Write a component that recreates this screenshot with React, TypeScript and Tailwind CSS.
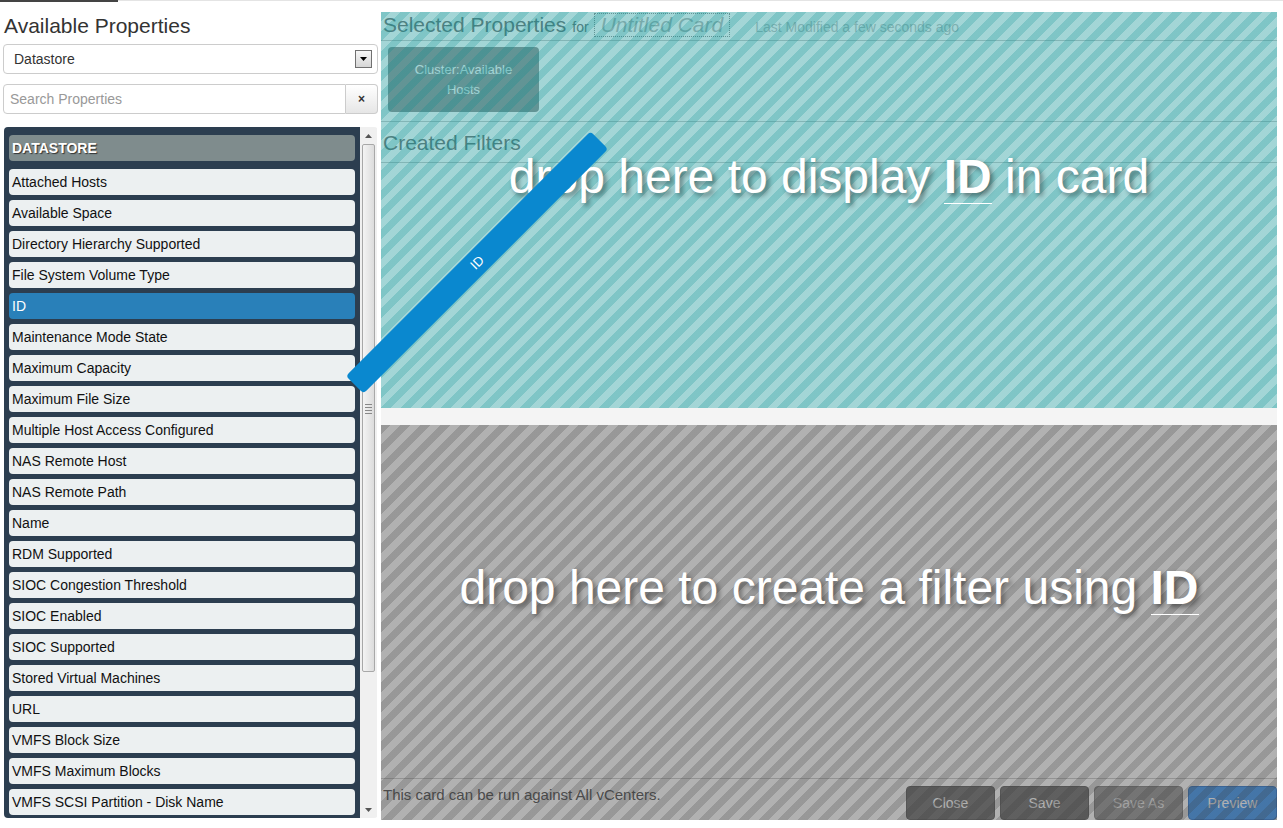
const properties = [
  "Attached Hosts",
  "Available Space",
  "Directory Hierarchy Supported",
  "File System Volume Type",
  "ID",
  "Maintenance Mode State",
  "Maximum Capacity",
  "Maximum File Size",
  "Multiple Host Access Configured",
  "NAS Remote Host",
  "NAS Remote Path",
  "Name",
  "RDM Supported",
  "SIOC Congestion Threshold",
  "SIOC Enabled",
  "SIOC Supported",
  "Stored Virtual Machines",
  "URL",
  "VMFS Block Size",
  "VMFS Maximum Blocks",
  "VMFS SCSI Partition - Disk Name",
];

const dropShadow = "[text-shadow:3px_3px_5px_rgba(0,0,0,0.45)]";

function Scrollbar() {
  return (
    <div className="w-[17px] bg-[#f0f0f0] flex flex-col items-center">
      <div className="h-[17px] w-full flex items-center justify-center">
        <svg width="7" height="4" viewBox="0 0 7 4">
          <path d="M0 4 L3.5 0 L7 4 Z" fill="#555" />
        </svg>
      </div>
      <div className="w-[13px] h-[528px] rounded-[2px] border border-[#a8a8a8] bg-[linear-gradient(90deg,#f4f4f4,#dcdcdc)] flex flex-col items-center justify-center gap-[2px] pt-[2px]">
        <div className="w-[7px] h-px bg-[#888]" />
        <div className="w-[7px] h-px bg-[#888]" />
        <div className="w-[7px] h-px bg-[#888]" />
        <div className="w-[7px] h-px bg-[#888]" />
      </div>
      <div className="flex-1" />
      <div className="h-[17px] w-full flex items-center justify-center">
        <svg width="7" height="4" viewBox="0 0 7 4">
          <path d="M0 0 L3.5 4 L7 0 Z" fill="#555" />
        </svg>
      </div>
    </div>
  );
}

function PropertyList() {
  return (
    <div className="mt-[13px] ml-[1px] h-[691px] flex rounded-[4px] overflow-hidden">
      <div className="w-[356px] bg-[#2c3e50] px-[5px] pt-[8px] flex flex-col gap-[5px]">
        <div className="h-[26px] shrink-0 mb-[3px] bg-[#7f8c8d] rounded-[4px] pl-[3px] text-[14px] leading-[26px] font-bold text-white [text-shadow:1px_1px_1px_#333]">
          DATASTORE
        </div>
        {properties.map((name) => (
          <div
            key={name}
            className={
              name === "ID"
                ? "h-[26px] shrink-0 bg-[#2980b9] rounded-[4px] pl-[3px] text-[14px] leading-[26px] text-white"
                : "h-[26px] shrink-0 bg-[#ecf0f1] rounded-[4px] pl-[3px] text-[14px] leading-[26px] text-[#111]"
            }
          >
            {name}
          </div>
        ))}
      </div>
      <Scrollbar />
    </div>
  );
}

function LeftPanel() {
  return (
    <div className="w-[381px] shrink-0 px-[3px] flex flex-col">
      <h1 className="mt-[10px] pl-px text-[21px] leading-[28px] text-[#333]">Available Properties</h1>
      <div className="mt-[4px] h-[30px] border border-[#ccc] rounded-[4px] flex items-center pl-[10px] pr-[5px] text-[14px] text-[#333]">
        <span className="flex-1">Datastore</span>
        <div className="w-[17px] h-[18px] border border-[#707070] bg-[linear-gradient(#f6f6f6,#d6d6d6)] flex items-center justify-center">
          <svg width="7" height="4" viewBox="0 0 7 4">
            <path d="M0 0 L3.5 4 L7 0 Z" fill="#000" />
          </svg>
        </div>
      </div>
      <div className="mt-[10px] h-[30px] flex">
        <input
          className="flex-1 min-w-0 border border-[#ccc] rounded-l-[4px] pl-[6px] text-[14px] text-[#333] placeholder:text-[#999] outline-none"
          placeholder="Search Properties"
        />
        <button className="w-[32px] border border-l-0 border-[#ccc] rounded-r-[4px] bg-[linear-gradient(#ffffff,#e6e6e6)] text-[12px] font-bold text-[#333]">
          ×
        </button>
      </div>
      <PropertyList />
    </div>
  );
}

function CardEditor() {
  return (
    <div className="h-full flex flex-col">
      <div className="h-[29px] shrink-0 border-b border-[#ccc] flex items-baseline pl-[2px] text-[#7a7a7a]">
        <span className="text-[21px] leading-[26px]">Selected Properties</span>
        <span className="ml-[6px] text-[14px]">for</span>
        <span className="ml-[5px] self-start mt-px h-[24px] border border-dotted border-[#999] px-[6px] text-[21px] leading-[22px] italic text-[#bbb]">
          Untitled Card
        </span>
        <span className="ml-[25px] text-[14px] text-[#c4c4c4]">Last Modified a few seconds ago</span>
      </div>
      <div className="h-[81px] shrink-0 border-b border-[#ccc] pt-[6px] pl-[7px]">
        <div className="w-[151px] h-[65px] rounded-[4px] bg-[#999] flex items-center justify-center text-center text-[13px] leading-[20px] text-white">
          Cluster:Available
          <br />
          Hosts
        </div>
      </div>
      <div className="h-[41px] shrink-0 border-b border-[#ccc] pt-[8px] pl-[2px] text-[21px] leading-[26px] text-[#7a7a7a]">
        Created Filters
      </div>
      <div className="flex-1" />
      <div className="h-[42px] shrink-0 border-t border-[#ccc] flex">
        <span className="flex-1 pt-[6px] pl-[2px] text-[15px] leading-[20px] text-[#555]">
          This card can be run against All vCenters.
        </span>
        <div className="pt-[7px] flex gap-[5px]">
          <button className="w-[89px] h-[34px] rounded-[4px] border border-[#666] bg-[#777] text-[14px] text-white">Close</button>
          <button className="w-[89px] h-[34px] rounded-[4px] border border-[#666] bg-[#777] text-[14px] text-white">Save</button>
          <button className="w-[89px] h-[34px] rounded-[4px] border border-[#888] bg-[#9a9a9a] text-[14px] text-[#e6e6e6]">Save As</button>
          <button className="w-[89px] h-[34px] rounded-[4px] border border-[#3a7fd0] bg-[#4a9cf0] text-[14px] text-white">Preview</button>
        </div>
      </div>
    </div>
  );
}

function DropZones() {
  return (
    <div className="absolute inset-0 flex flex-col pointer-events-none">
      <div className="h-[396px] shrink-0 bg-[repeating-linear-gradient(135deg,rgba(0,140,142,0.5)_0px,rgba(0,140,142,0.5)_7px,rgba(0,140,142,0.36)_7px,rgba(0,140,142,0.36)_14px)] pt-[141px] text-center">
        <p className={`text-[48px] leading-none text-white ${dropShadow}`}>
          drop here to display <b className="border-b border-white">ID</b> in card
        </p>
      </div>
      <div className="h-[17px] shrink-0 bg-[#f4f4f4]" />
      <div className="flex-1 bg-[repeating-linear-gradient(135deg,rgba(60,60,60,0.53)_0px,rgba(60,60,60,0.53)_7px,rgba(60,60,60,0.4)_7px,rgba(60,60,60,0.4)_14px)] pt-[139px] text-center">
        <p className={`text-[48px] leading-none text-white ${dropShadow}`}>
          drop here to create a filter using <b className="border-b border-white">ID</b>
        </p>
      </div>
    </div>
  );
}

export default function App() {
  return (
    <div className="relative w-[1283px] h-[828px] bg-white overflow-hidden font-['Liberation_Sans',Arial,sans-serif]">
      <div className="h-[2px] flex">
        <div className="w-[118px] bg-[#444]" />
        <div className="flex-1 border-t border-[#e4e4e4]" />
      </div>
      <div className="flex">
        <LeftPanel />
        <div className="relative mt-[10px] w-[896px] h-[808px] shrink-0">
          <CardEditor />
          <DropZones />
        </div>
      </div>
      {/* the property being dragged */}
      <div className="absolute left-[304px] top-[250px] w-[346px] h-[25px] -rotate-45 rounded-[4px] bg-[#0a88cf] flex items-center justify-center text-[13px] text-white">
        ID
      </div>
    </div>
  );
}
